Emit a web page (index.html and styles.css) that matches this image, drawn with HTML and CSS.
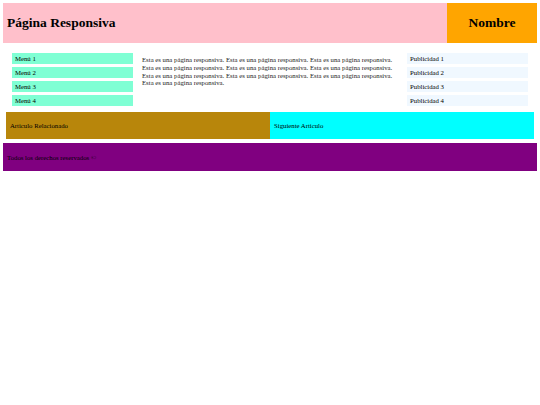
FILE: index.html
```html
<!DOCTYPE html>
<html lang="es">
<head>
<meta charset="utf-8">
<title>Página Responsiva</title>
<link rel="stylesheet" href="styles.css">
</head>
<body>
<header class="header">
  <h1 class="title">Página Responsiva</h1>
  <div class="name">Nombre</div>
</header>
<main class="main">
  <nav class="menu">
    <div class="menu-item">Menú 1</div>
    <div class="menu-item">Menú 2</div>
    <div class="menu-item">Menú 3</div>
    <div class="menu-item">Menú 4</div>
  </nav>
  <section class="content">
    <p>Esta es una página responsiva. Esta es una página responsiva. Esta es una página responsiva. Esta es una página responsiva. Esta es una página responsiva. Esta es una página responsiva. Esta es una página responsiva. Esta es una página responsiva. Esta es una página responsiva. Esta es una página responsiva.</p>
  </section>
  <aside class="ads">
    <div class="ad-item">Publicidad 1</div>
    <div class="ad-item">Publicidad 2</div>
    <div class="ad-item">Publicidad 3</div>
    <div class="ad-item">Publicidad 4</div>
  </aside>
</main>
<section class="articles">
  <div class="article related">Articulo Relacionado</div>
  <div class="article next">Siguiente Articulo</div>
</section>
<footer class="footer">Todos los derechos reservados ©</footer>
</body>
</html>
```
FILE: styles.css
```css
body {
  margin: 3px;
  font-family: "Liberation Serif", "Times New Roman", serif;
  font-size: 6.75px;
  color: #000;
}

.header {
  display: flex;
  height: 40px;
}

.title {
  flex: 1;
  margin: 0;
  background: #ffc0cb;
  font-size: 13.5px;
  font-weight: bold;
  display: flex;
  align-items: center;
  padding-left: 4px;
}

.name {
  width: 90px;
  background: #ffa500;
  font-size: 13.5px;
  font-weight: bold;
  display: flex;
  align-items: center;
  justify-content: center;
}

.main {
  display: flex;
  padding: 10px 9px 0;
}

.menu,
.ads {
  width: 121px;
  display: flex;
  flex-direction: column;
  gap: 3px;
}

.menu-item,
.ad-item {
  height: 11px;
  line-height: 11px;
  padding-left: 3px;
}

.menu-item {
  background: #7fffd4;
}

.ad-item {
  background: #f0f8ff;
}

.content {
  flex: 1;
  margin: 0 9px;
}

.content p {
  margin: 3px 0 0;
  line-height: 7.75px;
  color: #222;
}

.articles {
  display: flex;
  margin: 6px 3px 0;
  height: 27px;
}

.article {
  flex: 1;
  display: flex;
  align-items: center;
  padding-left: 4px;
}

.related {
  background: #b8860b;
}

.next {
  background: #00ffff;
}

.footer {
  margin-top: 4px;
  height: 28px;
  background: #800080;
  display: flex;
  align-items: center;
  padding-left: 4px;
}
```
